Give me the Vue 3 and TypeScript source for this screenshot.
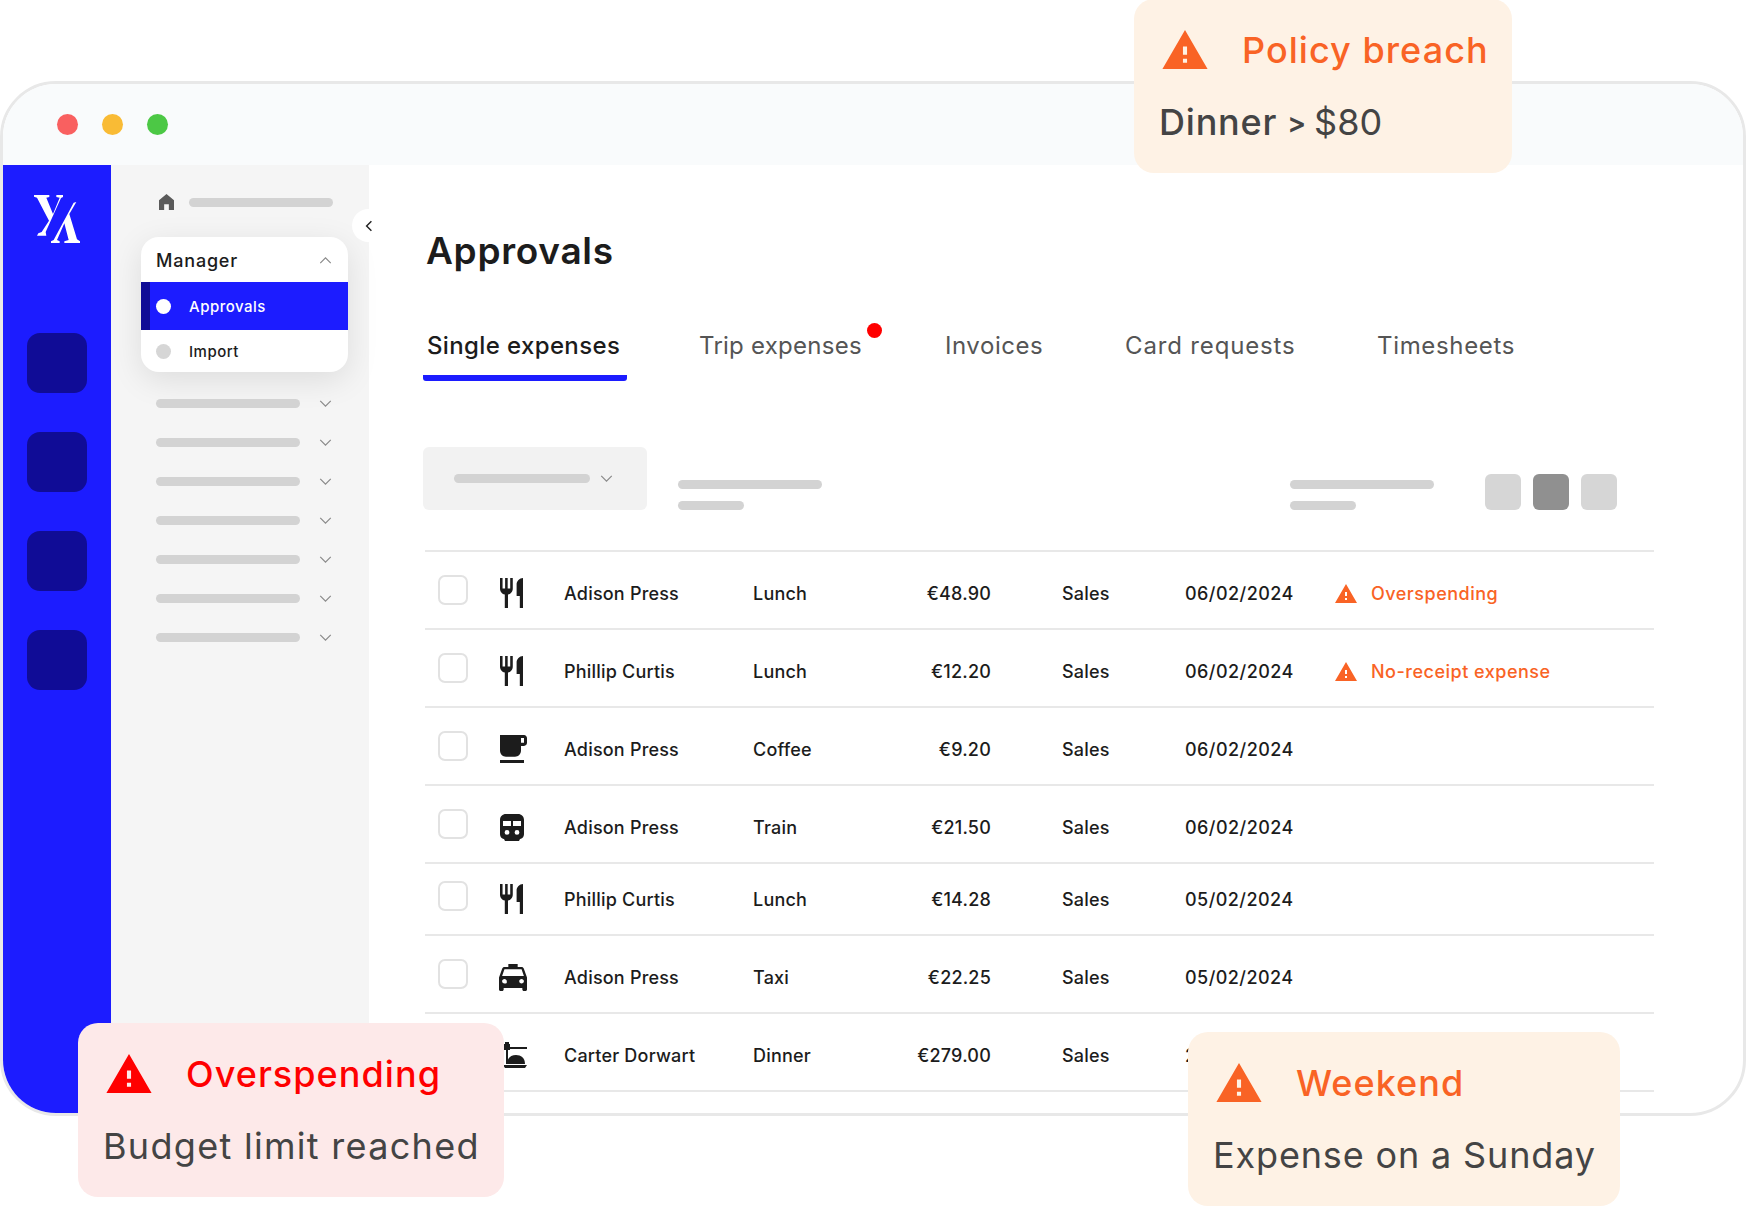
<template>
  <div class="page">
    <div class="window">
      <div class="titlebar">
        <span class="dot dot-red"></span>
        <span class="dot dot-yellow"></span>
        <span class="dot dot-green"></span>
      </div>

      <div class="body">
        <aside class="rail">
          <svg class="logo" viewBox="99 405 138 144" aria-label="Logo">
            <path fill="#fff" d="M99 405H145V411L136 413L156 462L176 413L166 411V405H186V411L180 414L134 516L136 527H108L112 520L122 516L144 482L108 413L99 410Z" />
            <path fill="#fff" d="M226 426L205 462L228 538L237 544V549H190V544L203 540L190 490L168 540L176 544V549H150V544L158 540L218 428Z" />
          </svg>
          <div class="rail-items">
            <div v-for="n in 4" :key="n" class="rail-item"></div>
          </div>
        </aside>

        <nav class="subnav">
          <div class="crumb">
            <svg class="home" viewBox="4 3 16 17"><path :d="homeIcon" /></svg>
            <span class="bar bar-crumb"></span>
          </div>

          <div class="menu">
            <div class="menu-head">
              <span>Manager</span>
              <svg class="chev chev-up" viewBox="0 0 14 8"><path d="M1 7l6-6 6 6" /></svg>
            </div>
            <div class="menu-item active">
              <span class="bullet"></span>
              <span>Approvals</span>
            </div>
            <div class="menu-item">
              <span class="bullet"></span>
              <span>Import</span>
            </div>
          </div>

          <div class="nav-rows">
            <div v-for="n in 7" :key="n" class="nav-row">
              <span class="bar bar-nav"></span>
              <svg class="chev" viewBox="0 0 14 8"><path d="M1 1l6 6 6-6" /></svg>
            </div>
          </div>

          <button class="collapse" type="button" aria-label="Collapse">
            <svg viewBox="0 0 10 14"><path d="M8 1L2 7l6 6" /></svg>
          </button>
        </nav>

        <main class="content">
          <h1 class="title">Approvals</h1>

          <div class="tabs">
            <div
              v-for="tab in tabs"
              :key="tab.label"
              class="tab"
              :class="{ current: tab.current }"
              :style="{ letterSpacing: `${tab.tracking}px` }"
            >
              <span class="tab-label">
                {{ tab.label }}
                <i v-if="tab.alert" class="tab-dot"></i>
              </span>
            </div>
          </div>

          <div class="filters">
            <div class="select">
              <span class="bar bar-select"></span>
              <svg class="chev" viewBox="0 0 14 8"><path d="M1 1l6 6 6-6" /></svg>
            </div>
            <div class="stack">
              <span class="bar bar-long"></span>
              <span class="bar bar-short"></span>
            </div>
            <div class="stack stack-right">
              <span class="bar bar-long"></span>
              <span class="bar bar-short"></span>
            </div>
            <div class="pager">
              <span class="page-btn"></span>
              <span class="page-btn on"></span>
              <span class="page-btn"></span>
            </div>
          </div>

          <div class="table">
            <div
              v-for="(row, i) in rows"
              :key="i"
              class="row"
              :class="{ short: row.short }"
            >
              <span class="check"></span>
              <span class="cat">
                <svg
                  v-if="row.icon !== 'dinner'"
                  :class="`ico ico-${row.icon}`"
                  :viewBox="icons[row.icon].box"
                  preserveAspectRatio="none"
                >
                  <path :d="icons[row.icon].d" />
                </svg>
                <svg v-else class="ico ico-dinner" viewBox="0 0 24 27">
                  <path d="M0 5h24v2H0z" />
                  <path d="M2 0h4v2H2zM1 2h6v6H1z" />
                  <path d="M3 7h2v15H3z" />
                  <path d="M6 22c0-6 4-9 9-9s9 3 9 9z" transform="translate(-2 0)" />
                  <path d="M0 23h24l-2 3H2z" />
                </svg>
              </span>
              <span class="cell">{{ row.name }}</span>
              <span class="cell">{{ row.type }}</span>
              <span class="cell amount">{{ row.amount }}</span>
              <span class="cell dept">Sales</span>
              <span class="cell date">{{ row.date }}</span>
              <span v-if="row.flag" class="cell flag">
                <svg class="warn" viewBox="1 2 22 19"><path :d="warnIcon" /></svg>
                {{ row.flag }}
              </span>
            </div>
          </div>
        </main>
      </div>
    </div>

    <div class="note note-policy">
      <div class="note-head">
        <svg class="warn" viewBox="1 2 22 19"><path :d="warnIcon" /></svg>
        <span>Policy breach</span>
      </div>
      <div class="note-text"><span class="lead">Dinner</span><span class="gt">&gt;</span>$80</div>
    </div>

    <div class="note note-over">
      <div class="note-head">
        <svg class="warn" viewBox="1 2 22 19"><path :d="warnIcon" /></svg>
        <span>Overspending</span>
      </div>
      <div class="note-text">Budget limit reached</div>
    </div>

    <div class="note note-weekend">
      <div class="note-head">
        <svg class="warn" viewBox="1 2 22 19"><path :d="warnIcon" /></svg>
        <span>Weekend</span>
      </div>
      <div class="note-text">Expense on a Sunday</div>
    </div>
  </div>
</template>

<script setup lang="ts">
type IconName = 'food' | 'coffee' | 'train' | 'taxi' | 'dinner'

interface Row {
  icon: IconName
  name: string
  type: string
  amount: string
  date: string
  flag?: string
  short?: boolean
}

const warnIcon = 'M1 21h22L12 2 1 21zm12-3h-2v-2h2v2zm0-4h-2v-4h2v4z'
const homeIcon = 'M12 3l8 6.5V20h-5.5v-6h-5v6H4V9.5z'

const icons: Record<string, { box: string; d: string }> = {
  food: {
    box: '3 2 18 20',
    d: 'M11 9H9V2H7v7H5V2H3v7c0 2.12 1.66 3.84 3.75 3.97V22h2.5v-9.03C11.34 12.84 13 11.12 13 9V2h-2v7zm5-3v8h2.5v8H21V2c-2.76 0-5 2.24-5 4z'
  },
  coffee: {
    box: '4 3 18 18',
    d: 'M20 3H4v10c0 2.21 1.79 4 4 4h6c2.21 0 4-1.79 4-4v-3h2c1.11 0 2-.9 2-2V5c0-1.11-.89-2-2-2zm0 5h-2V5h2v3zM4 19h16v2H4z'
  },
  train: {
    box: '0 0 24 27',
    d: 'M6 0h12c3.5 0 6 2.5 6 6v14c0 3-2 5-5 5H5c-3 0-5-2-5-5V6c0-3.5 2.5-6 6-6zM3 7v5h8V7zM13 7v5h8V7zM7 16a2.4 2.4 0 1 0 0 4.8a2.4 2.4 0 1 0 0-4.8zM17 16a2.4 2.4 0 1 0 0 4.8a2.4 2.4 0 1 0 0-4.8zM4 25h16l-1 2H5z'
  },
  taxi: {
    box: '3 3 18 18',
    d: 'M18.92 6.01C18.72 5.42 18.16 5 17.5 5H15V3H9v2H6.5c-.66 0-1.21.42-1.42 1.01L3 12v8c0 .55.45 1 1 1h1c.55 0 1-.45 1-1v-1h12v1c0 .55.45 1 1 1h1c.55 0 1-.45 1-1v-8l-2.08-5.99zM6.5 16c-.83 0-1.5-.67-1.5-1.5S5.67 13 6.5 13s1.5.67 1.5 1.5S8.33 16 6.5 16zm11 0c-.83 0-1.5-.67-1.5-1.5s.67-1.5 1.5-1.5 1.5.67 1.5 1.5-.67 1.5-1.5 1.5zM5 11l1.5-4.5h11L19 11H5z'
  }
}

const tabs = [
  { label: 'Single expenses', current: true, tracking: 0.37 },
  { label: 'Trip expenses', alert: true, tracking: 0.25 },
  { label: 'Invoices', tracking: 0.55 },
  { label: 'Card requests', tracking: 0.85 },
  { label: 'Timesheets', tracking: 0.67 }
]

const rows: Row[] = [
  { icon: 'food', name: 'Adison Press', type: 'Lunch', amount: '€48.90', date: '06/02/2024', flag: 'Overspending' },
  { icon: 'food', name: 'Phillip Curtis', type: 'Lunch', amount: '€12.20', date: '06/02/2024', flag: 'No-receipt expense' },
  { icon: 'coffee', name: 'Adison Press', type: 'Coffee', amount: '€9.20', date: '06/02/2024' },
  { icon: 'train', name: 'Adison Press', type: 'Train', amount: '€21.50', date: '06/02/2024' },
  { icon: 'food', name: 'Phillip Curtis', type: 'Lunch', amount: '€14.28', date: '05/02/2024', short: true },
  { icon: 'taxi', name: 'Adison Press', type: 'Taxi', amount: '€22.25', date: '05/02/2024' },
  { icon: 'dinner', name: 'Carter Dorwart', type: 'Dinner', amount: '€279.00', date: '28/01/2024' }
]
</script>

<style>
html,
body {
  margin: 0;
  background: #fff;
}
</style>

<style scoped>
.page {
  position: relative;
  width: 1746px;
  height: 1206px;
  overflow: hidden;
  box-sizing: border-box;
  padding-top: 81px;
  font-family: Inter, "Open Sans", sans-serif;
  color: #1c1c1c;
}

.window {
  box-sizing: border-box;
  width: 1746px;
  height: 1035px;
  border: 3px solid #e8e8e8;
  border-radius: 56px;
  overflow: hidden;
  display: flex;
  flex-direction: column;
  background: #fff;
}

.titlebar {
  flex: 0 0 81px;
  display: flex;
  align-items: center;
  gap: 24px;
  padding-left: 54px;
  background: #f9fbfc;
}

.dot {
  width: 21px;
  height: 21px;
  border-radius: 50%;
}
.dot-red { background: #f96060; }
.dot-yellow { background: #f9bb35; }
.dot-green { background: #4cc845; }

.body {
  flex: 1;
  display: flex;
  min-height: 0;
}

.rail {
  flex: 0 0 108px;
  background: #1c1cff;
  display: flex;
  flex-direction: column;
  align-items: center;
}

.logo {
  width: 46px;
  height: 48px;
  margin-top: 30px;
}

.rail-items {
  display: flex;
  flex-direction: column;
  gap: 39px;
  margin-top: 90px;
}

.rail-item {
  width: 60px;
  height: 60px;
  border-radius: 13px;
  background: #100c96;
}

.subnav {
  position: relative;
  z-index: 2;
  flex: 0 0 258px;
  box-sizing: border-box;
  padding: 27px 21px 0 30px;
  background: #f5f5f5;
}

.crumb {
  display: flex;
  align-items: center;
  gap: 15px;
  height: 20px;
  padding-left: 18px;
}

.home {
  width: 15px;
  height: 16px;
  fill: #5a5a5a;
}

.bar {
  display: block;
  height: 9px;
  border-radius: 5px;
  background: #d3d3d3;
}

.bar-crumb { width: 144px; }
.bar-nav { width: 144px; }
.bar-select { width: 136px; }
.bar-long { width: 144px; }
.bar-short { width: 66px; }

.menu {
  margin-top: 25px;
  height: 135px;
  border-radius: 18px;
  overflow: hidden;
  background: #fff;
  box-shadow: 0 8px 32px rgba(0, 0, 0, 0.1);
  font-size: 15px;
  font-weight: 500;
  letter-spacing: 0.5px;
}

.menu-head {
  box-sizing: border-box;
  height: 45px;
  display: flex;
  align-items: center;
  justify-content: space-between;
  padding: 2px 16px 0 15px;
  font-size: 18px;
  letter-spacing: 0.8px;
}

.chev {
  width: 13px;
  height: 7px;
  flex: none;
  fill: none;
  stroke: #8a8a8a;
  stroke-width: 1.4;
}

.menu-item {
  height: 42px;
  display: flex;
  align-items: center;
  gap: 18px;
  padding-left: 15px;
}

.menu-item.active {
  height: 48px;
  padding-left: 6px;
  border-left: 9px solid #100c96;
  background: #1c1cff;
  color: #fff;
}

.bullet {
  width: 15px;
  height: 15px;
  border-radius: 50%;
  background: #d6d6d6;
}

.active .bullet {
  background: #fff;
}

.nav-rows {
  display: flex;
  flex-direction: column;
  gap: 30px;
  margin-top: 27px;
  padding: 0 15px;
}

.nav-row {
  display: flex;
  align-items: center;
  justify-content: space-between;
  padding-right: 1px;
}

.collapse {
  position: absolute;
  top: 44px;
  left: 241px;
  width: 33px;
  height: 33px;
  padding: 0;
  border: 0;
  border-radius: 50%;
  background: #fff;
  display: flex;
  align-items: center;
  justify-content: center;
}

.collapse svg {
  width: 8px;
  height: 12px;
  fill: none;
  stroke: #222;
  stroke-width: 1.8;
}

.content {
  flex: 1;
  min-width: 0;
  padding: 64px 0 0 54px;
}

.title {
  margin: 0 0 0 3px;
  font-size: 37px;
  line-height: 44px;
  font-weight: 600;
  letter-spacing: 0.7px;
}

.tabs {
  display: grid;
  grid-template-columns: 272px 246px 180px 252px auto;
  margin-top: 58px;
  height: 61px;
}

.tab {
  font-size: 24px;
  line-height: 30px;
  color: #555;
  padding-left: 4px;
}

.tab-label {
  position: relative;
  display: inline-block;
}

.tab.current {
  color: #1c1c1c;
  font-weight: 500;
  width: 200px;
  height: 44px;
  border-bottom: 6px solid #1c1cff;
  border-radius: 0 0 3px 3px;
}

.tab-dot {
  position: absolute;
  top: -8px;
  right: -20px;
  width: 15px;
  height: 15px;
  border-radius: 50%;
  background: #f00;
}

.filters {
  display: flex;
  align-items: flex-end;
  margin-top: 55px;
  height: 63px;
}

.select {
  box-sizing: border-box;
  width: 224px;
  height: 63px;
  display: flex;
  align-items: center;
  gap: 10px;
  padding: 0 0 0 31px;
  border-radius: 6px;
  background: #f2f2f2;
}

.stack {
  display: flex;
  flex-direction: column;
  gap: 12px;
  margin-left: 31px;
}

.stack-right {
  margin-left: 468px;
}

.pager {
  display: flex;
  gap: 12px;
  margin-left: 51px;
}

.page-btn {
  width: 36px;
  height: 36px;
  border-radius: 6px;
  background: #d6d6d6;
}

.page-btn.on {
  background: #909090;
}

.table {
  width: 1229px;
  margin: 40px 0 0 2px;
  border-top: 2px solid #e8e8e8;
}

.row {
  box-sizing: border-box;
  height: 78px;
  display: grid;
  grid-template-columns: 62px 64px 189px 100px 138px 194px 150px 1fr;
  align-items: center;
  border-bottom: 2px solid #e8e8e8;
  padding-left: 13px;
  font-size: 18px;
  font-weight: 500;
  letter-spacing: 0.2px;
  white-space: nowrap;
}

.row.short {
  height: 72px;
  padding-bottom: 6px;
}

.check {
  box-sizing: border-box;
  width: 30px;
  height: 30px;
  border: 2px solid #e2e2e2;
  border-radius: 7px;
  background: #fff;
}

.cat {
  display: flex;
  align-items: center;
  padding-top: 6px;
}

.cell {
  padding-top: 6px;
}

.ico {
  fill: #1c1c1c;
  fill-rule: evenodd;
  display: block;
}

.ico-food { width: 23px; height: 30px; }
.ico-coffee { width: 27px; height: 28px; }
.ico-train { width: 24px; height: 27px; }
.ico-taxi { width: 28px; height: 27px; margin-left: -1px; }
.ico-dinner { width: 24px; height: 27px; margin-left: 3px; }

.amount {
  text-align: right;
}

.dept {
  padding-left: 71px;
}

.date {
  letter-spacing: 0.45px;
}

.flag {
  display: flex;
  align-items: center;
  gap: 14px;
  color: #f96325;
  letter-spacing: 0.5px;
}

.warn {
  fill: currentColor;
  flex: none;
}

.flag .warn {
  width: 22px;
  height: 19px;
}

.note {
  position: absolute;
  z-index: 5;
  box-sizing: border-box;
  height: 174px;
  padding: 31px 0 0 25px;
  border-radius: 20px;
  background: #fef2e5;
  color: #f96325;
}

.note-policy {
  top: -1px;
  left: 1134px;
  width: 378px;
}

.note-over {
  top: 1023px;
  left: 78px;
  width: 426px;
  background: #fde9e9;
  color: #f00;
}

.note-weekend {
  top: 1032px;
  left: 1188px;
  width: 432px;
}

.note-head {
  display: flex;
  align-items: center;
  gap: 34px;
  padding-left: 3px;
  height: 39px;
  font-size: 36px;
  font-weight: 500;
  letter-spacing: 1.05px;
}

.note-head .warn {
  width: 46px;
  height: 39px;
}

.note-text {
  margin-top: 31px;
  font-size: 36px;
  line-height: 44px;
  color: #444;
}

.note-over .note-text {
  letter-spacing: 1.3px;
}

.note-weekend .note-text {
  letter-spacing: 0.85px;
}

.lead {
  font-weight: 500;
  letter-spacing: 0.8px;
}

.gt {
  margin: 0 8px 0 10px;
  font-size: 28px;
  font-weight: 600;
  vertical-align: 2px;
}
</style>
